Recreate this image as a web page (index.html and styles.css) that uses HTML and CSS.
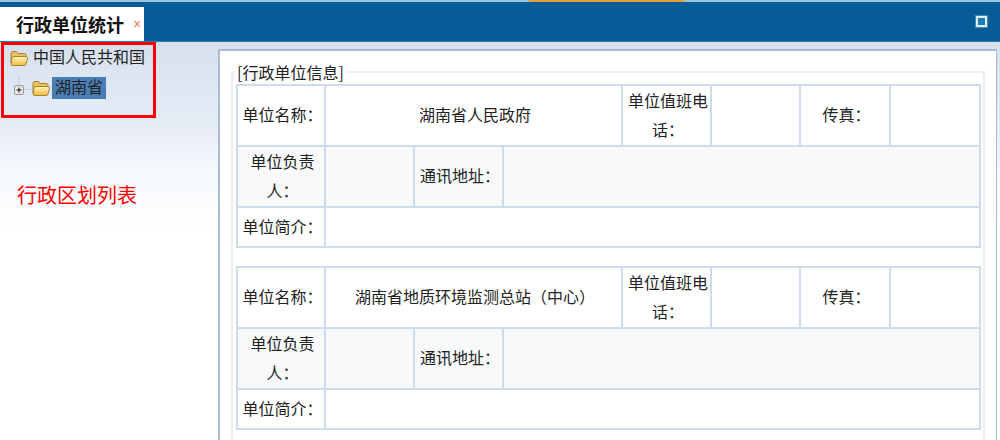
FILE: index.html
```html
<!DOCTYPE html>
<html lang="zh-CN">
<head>
    <meta charset="UTF-8">
    <meta name="viewport" content="width=device-width, initial-scale=1.0">
    <title>行政单位统计</title>
    <link rel="stylesheet" href="styles.css">
</head>
<body>

<!-- 顶部标签栏 -->
<div class="top-strip"><div class="top-strip-mark"></div></div>
<div class="header">
    <div class="tab">
        <span class="tab-title">行政单位统计</span>
        <span class="tab-close">×</span>
    </div>
    <div class="max-btn"></div>
</div>

<div class="main">
    <!-- 左侧行政区划树 -->
    <div class="sidebar">
        <div class="tree-box">
            <div class="tree-row">
                <svg class="folder" width="18" height="17" viewBox="0 0 18 17">
                    <defs>
                        <linearGradient id="folderFront" x1="0" y1="0" x2="0" y2="1">
                            <stop offset="0" stop-color="#fff6c4"/>
                            <stop offset="1" stop-color="#f0b93c"/>
                        </linearGradient>
                    </defs>
                    <path d="M1 13V3.500Q1 1.500 3 1.500H6.500L8 3.500H14.500Q16 3.500 16 5V7H4z" fill="#e9c163" stroke="#a8842f"/>
                    <path d="M1 14Q1 15.500 3 15.500H14Q15.500 15.500 16 14L17.500 8.500Q17.500 6.500 16 6.500H4Q2.500 6.500 2 8z" fill="url(#folderFront)" stroke="#a8842f"/>
                </svg>
                <span class="tree-label">中国人民共和国</span>
            </div>
            <div class="tree-row tree-child">
                <svg class="expander" width="18" height="26" viewBox="0 0 18 26">
                    <path d="M5 0V10M10 14.500H18" stroke="#b5b5b5" stroke-dasharray="1 1" fill="none"/>
                    <rect x=".5" y="10.500" width="9" height="9" rx="1.500" fill="#e8e8e8" stroke="#9a9a9a"/>
                    <path d="M2.500 15h5M5 12.500v5" stroke="#111" fill="none"/>
                </svg>
                <svg class="folder folder-open" width="18" height="17" viewBox="0 0 18 17">
                    <path d="M1 13V3.500Q1 1.500 3 1.500H6.500L8 3.500H14.500Q16 3.500 16 5V7H4z" fill="#e9c163" stroke="#a8842f"/>
                    <path d="M1 14Q1 15.500 3 15.500H14Q15.500 15.500 16 14L17.500 8.500Q17.500 6.500 16 6.500H4Q2.500 6.500 2 8z" fill="url(#folderFront)" stroke="#a8842f"/>
                </svg>
                <span class="tree-label selected">湖南省</span>
            </div>
        </div>
        <div class="note">行政区划列表</div>
    </div>

    <!-- 右侧内容 -->
    <div class="panel">
        <fieldset class="info-box">
            <legend>[行政单位信息]</legend>
            <table class="info-table">
                <colgroup>
                    <col class="c1"><col class="c2"><col class="c3"><col class="c4">
                    <col class="c5"><col class="c6"><col class="c7"><col class="c8">
                </colgroup>
                <tr class="row-a">
                    <td>单位名称：</td>
                    <td colspan="3">湖南省人民政府</td>
                    <td>单位值班电话：</td>
                    <td></td>
                    <td>传真：</td>
                    <td></td>
                </tr>
                <tr class="row-b">
                    <td>单位负责人：</td>
                    <td></td>
                    <td>通讯地址：</td>
                    <td colspan="5"></td>
                </tr>
                <tr class="row-c">
                    <td>单位简介：</td>
                    <td colspan="7"></td>
                </tr>
            </table>
            <table class="info-table">
                <colgroup>
                    <col class="c1"><col class="c2"><col class="c3"><col class="c4">
                    <col class="c5"><col class="c6"><col class="c7"><col class="c8">
                </colgroup>
                <tr class="row-a">
                    <td>单位名称：</td>
                    <td colspan="3">湖南省地质环境监测总站（中心）</td>
                    <td>单位值班电话：</td>
                    <td></td>
                    <td>传真：</td>
                    <td></td>
                </tr>
                <tr class="row-b">
                    <td>单位负责人：</td>
                    <td></td>
                    <td>通讯地址：</td>
                    <td colspan="5"></td>
                </tr>
                <tr class="row-c">
                    <td>单位简介：</td>
                    <td colspan="7"></td>
                </tr>
            </table>
        </fieldset>
    </div>
</div>

</body>
</html>
```

FILE: styles.css
```css
html, body {
    margin: 0;
    height: 440px;
    overflow: hidden;
}
body {
    font-family: "Liberation Sans", "Noto Sans CJK SC", sans-serif;
    font-size: 16px;
    color: #222;
    background-color: #fff;
}

/* 顶部 */
.top-strip {
    height: 2px;
    background-color: #9cc3dc;
    padding-left: 529px;
}
.top-strip-mark {
    width: 156px;
    height: 2px;
    background-color: #e0a040;
}
.header {
    height: 40px;
    background-color: #055c96;
    border-bottom: 1px solid #2f78a8;
    display: flex;
    justify-content: space-between;
    align-items: flex-end;
    box-sizing: border-box;
}
.tab {
    width: 144px;
    height: 34px;
    background-color: #fff;
    display: flex;
    align-items: center;
    padding-left: 16px;
    box-sizing: border-box;
}
.tab-title {
    font-size: 18px;
    font-weight: bold;
    color: #111;
}
.tab-close {
    margin-left: 9px;
    font-size: 14px;
    color: #e8706c;
}
.max-btn {
    width: 7px;
    height: 7px;
    border: 2px solid #e4f0f8;
    outline: 1px solid #3c8cc0;
    background-color: #1f7db4;
    margin: 0 13px 14px 0;
}

/* 主体 */
.main {
    display: flex;
    height: 398px;
    background: linear-gradient(to bottom, #d6e1ee 0, #e6ecf6 80px, #f5f8fc 130px, #fff 190px);
}
.sidebar {
    width: 218px;
    flex-shrink: 0;
}
.tree-box {
    width: 155px;
    height: 76px;
    margin-left: 1px;
    border: 3px solid #f00;
    box-sizing: border-box;
    padding-left: 6px;
}
.tree-row {
    display: flex;
    align-items: center;
    height: 26px;
}
.tree-child {
    margin-top: 4px;
    padding-left: 4px;
}
.folder {
    margin-right: 5px;
}
.folder-open {
    margin-right: 2px;
}
.tree-label {
    line-height: 22px;
    color: #222;
}
.selected {
    background-color: #4a7db5;
    padding: 0 3px 0 3px;
}
.note {
    margin: 62px 0 0 17px;
    font-size: 20px;
    color: #f00;
}

/* 右侧面板 */
.panel {
    flex: 1;
    height: 391px;
    overflow: hidden;
    margin: 7px 3px 0 0;
    background-color: #fff;
    border: 2px solid #a9bccf;
    border-width: 2px 1px 0 2px;
    box-sizing: border-box;
    padding: 10px 11px 0 11px;
}
.info-box {
    margin: 0;
    padding: 0 3px;
    border: 2px solid #eee;
    border-bottom: 0;
    min-width: 0;
}
.info-box legend {
    padding: 0 2px;
    margin: 0 0 1px -1px;
    line-height: 22px;
    font-family: "Noto Sans CJK SC", sans-serif;
}
.info-table {
    width: 744px;
    table-layout: fixed;
    border-collapse: collapse;
    margin-bottom: 18px;
}
.info-table td {
    border: 2px solid #ccdcec;
    padding: 2px 0 0 3px;
    text-align: center;
    line-height: 28.5px;
}
.c1 { width: 88px; }
.c2, .c3, .c5, .c6 { width: 89px; }
.c4 { width: 119px; }
.c7 { width: 90px; }
.c8 { width: 90px; }
.row-a { height: 61px; }
.row-b { height: 61px; background-color: #f7f9fb; }
.row-c { height: 40px; }
```
